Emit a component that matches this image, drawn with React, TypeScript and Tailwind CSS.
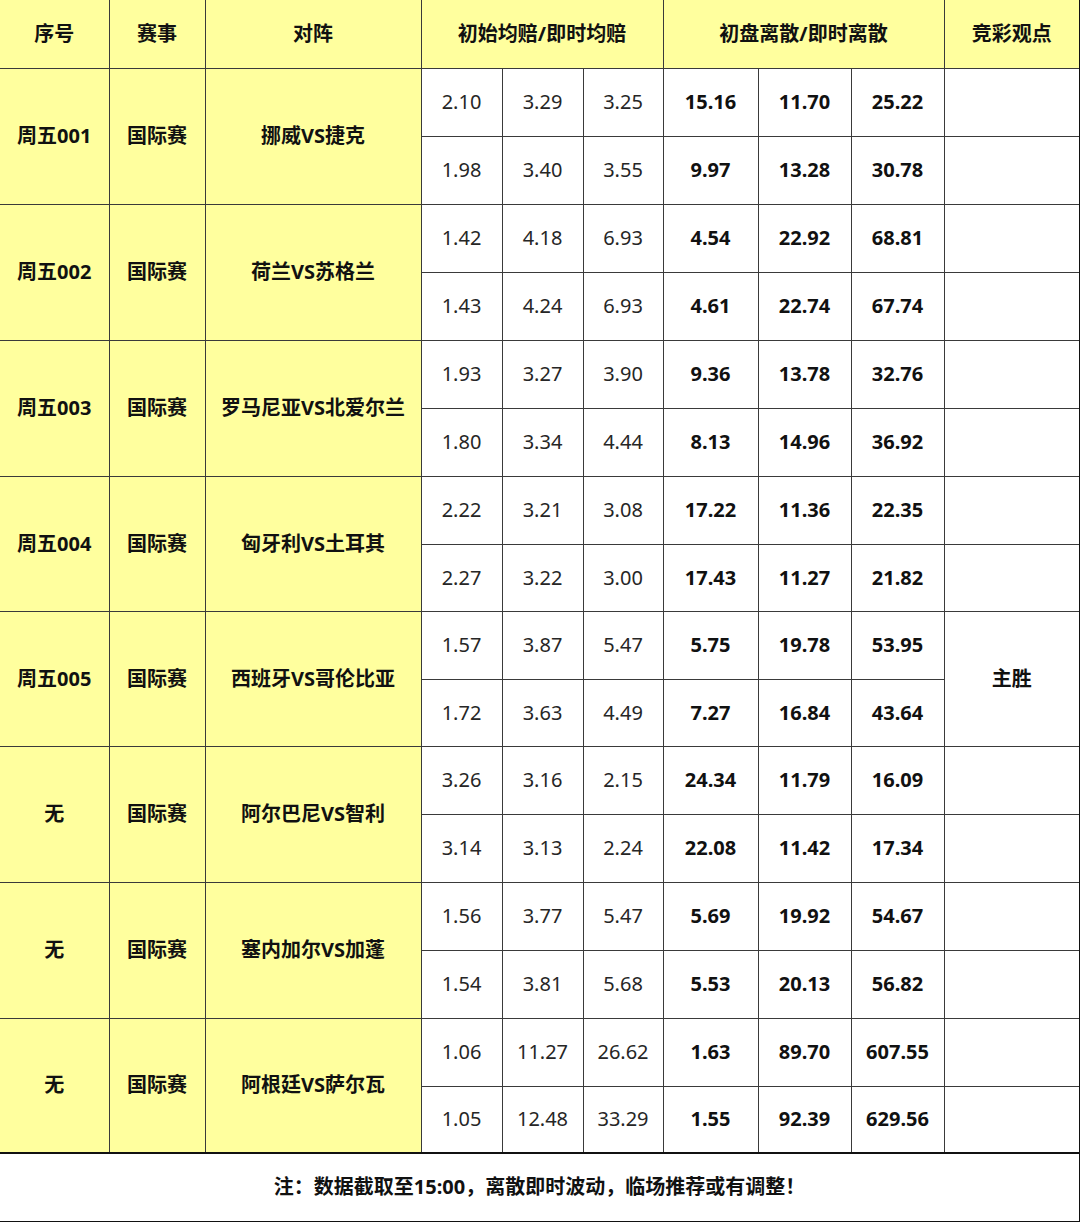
import React from "react";

type Match = {
  no: string;
  league: string;
  teams: string;
  odds: [string[], string[]];
  disp: [string[], string[]];
  tip?: string;
};

const matches: Match[] = [
  {
    no: "周五001",
    league: "国际赛",
    teams: "挪威VS捷克",
    odds: [["2.10", "3.29", "3.25"], ["1.98", "3.40", "3.55"]],
    disp: [["15.16", "11.70", "25.22"], ["9.97", "13.28", "30.78"]],
  },
  {
    no: "周五002",
    league: "国际赛",
    teams: "荷兰VS苏格兰",
    odds: [["1.42", "4.18", "6.93"], ["1.43", "4.24", "6.93"]],
    disp: [["4.54", "22.92", "68.81"], ["4.61", "22.74", "67.74"]],
  },
  {
    no: "周五003",
    league: "国际赛",
    teams: "罗马尼亚VS北爱尔兰",
    odds: [["1.93", "3.27", "3.90"], ["1.80", "3.34", "4.44"]],
    disp: [["9.36", "13.78", "32.76"], ["8.13", "14.96", "36.92"]],
  },
  {
    no: "周五004",
    league: "国际赛",
    teams: "匈牙利VS土耳其",
    odds: [["2.22", "3.21", "3.08"], ["2.27", "3.22", "3.00"]],
    disp: [["17.22", "11.36", "22.35"], ["17.43", "11.27", "21.82"]],
  },
  {
    no: "周五005",
    league: "国际赛",
    teams: "西班牙VS哥伦比亚",
    odds: [["1.57", "3.87", "5.47"], ["1.72", "3.63", "4.49"]],
    disp: [["5.75", "19.78", "53.95"], ["7.27", "16.84", "43.64"]],
    tip: "主胜",
  },
  {
    no: "无",
    league: "国际赛",
    teams: "阿尔巴尼VS智利",
    odds: [["3.26", "3.16", "2.15"], ["3.14", "3.13", "2.24"]],
    disp: [["24.34", "11.79", "16.09"], ["22.08", "11.42", "17.34"]],
  },
  {
    no: "无",
    league: "国际赛",
    teams: "塞内加尔VS加蓬",
    odds: [["1.56", "3.77", "5.47"], ["1.54", "3.81", "5.68"]],
    disp: [["5.69", "19.92", "54.67"], ["5.53", "20.13", "56.82"]],
  },
  {
    no: "无",
    league: "国际赛",
    teams: "阿根廷VS萨尔瓦",
    odds: [["1.06", "11.27", "26.62"], ["1.05", "12.48", "33.29"]],
    disp: [["1.63", "89.70", "607.55"], ["1.55", "92.39", "629.56"]],
  },
];

// rows measured off the sheet: mostly 68px, a few 67px
const shortRows = [3, 4, 7];

const cell = "border border-[#3a3a3a] text-center align-middle p-0";
const yellow = "bg-[#ffff9e] font-bold text-[#111]";
const odd = "text-[#262626]";
const bold = "font-bold text-[#111]";

export default function App() {
  return (
    <div
      className="w-[1080px] bg-white text-[20px]"
      style={{ fontFamily: '"Noto Sans", "Noto Sans CJK SC", sans-serif' }}
    >
      <table className="w-[1080px] table-fixed border-collapse">
        <colgroup>
          <col className="w-[109px]" />
          <col className="w-[96px]" />
          <col className="w-[216px]" />
          <col className="w-[81px]" />
          <col className="w-[81px]" />
          <col className="w-[80px]" />
          <col className="w-[95px]" />
          <col className="w-[93px]" />
          <col className="w-[93px]" />
          <col className="w-[136px]" />
        </colgroup>
        <thead>
          <tr className="h-[68px]">
            <th className={`${cell} ${yellow} border-l-0 border-t-0`}>序号</th>
            <th className={`${cell} ${yellow} border-t-0`}>赛事</th>
            <th className={`${cell} ${yellow} border-t-0`}>对阵</th>
            <th colSpan={3} className={`${cell} ${yellow} border-t-0`}>
              初始均赔/即时均赔
            </th>
            <th colSpan={3} className={`${cell} ${yellow} border-t-0`}>
              初盘离散/即时离散
            </th>
            <th className={`${cell} ${yellow} border-t-0 border-r-2 border-r-[#111]`}>竞彩观点</th>
          </tr>
        </thead>
        <tbody>
          {matches.map((m, i) => (
            <React.Fragment key={i}>
              <tr className="h-[68px]">
                <td rowSpan={2} className={`${cell} ${yellow} border-l-0`}>
                  {m.no}
                </td>
                <td rowSpan={2} className={`${cell} ${yellow}`}>
                  {m.league}
                </td>
                <td rowSpan={2} className={`${cell} ${yellow}`}>
                  {m.teams}
                </td>
                {m.odds[0].map((v, j) => (
                  <td key={"o" + j} className={`${cell} ${odd}`}>
                    {v}
                  </td>
                ))}
                {m.disp[0].map((v, j) => (
                  <td key={"d" + j} className={`${cell} ${bold}`}>
                    {v}
                  </td>
                ))}
                {m.tip ? (
                  <td rowSpan={2} className={`${cell} ${bold} border-r-2 border-r-[#111]`}>
                    {m.tip}
                  </td>
                ) : (
                  <td className={`${cell} border-r-2 border-r-[#111]`} />
                )}
              </tr>
              <tr className={shortRows.includes(i) ? "h-[67px]" : "h-[68px]"}>
                {m.odds[1].map((v, j) => (
                  <td key={"o" + j} className={`${cell} ${odd}`}>
                    {v}
                  </td>
                ))}
                {m.disp[1].map((v, j) => (
                  <td key={"d" + j} className={`${cell} ${bold}`}>
                    {v}
                  </td>
                ))}
                {!m.tip && <td className={`${cell} border-r-2 border-r-[#111]`} />}
              </tr>
            </React.Fragment>
          ))}
          <tr className="h-[69px]">
            <td
              colSpan={10}
              className="border-l-0 border-t-2 border-b-[3px] border-r-2 border-[#111] text-center align-middle font-bold text-[#111]"
            >
              注：数据截取至15:00，离散即时波动，临场推荐或有调整！
            </td>
          </tr>
        </tbody>
      </table>
    </div>
  );
}
